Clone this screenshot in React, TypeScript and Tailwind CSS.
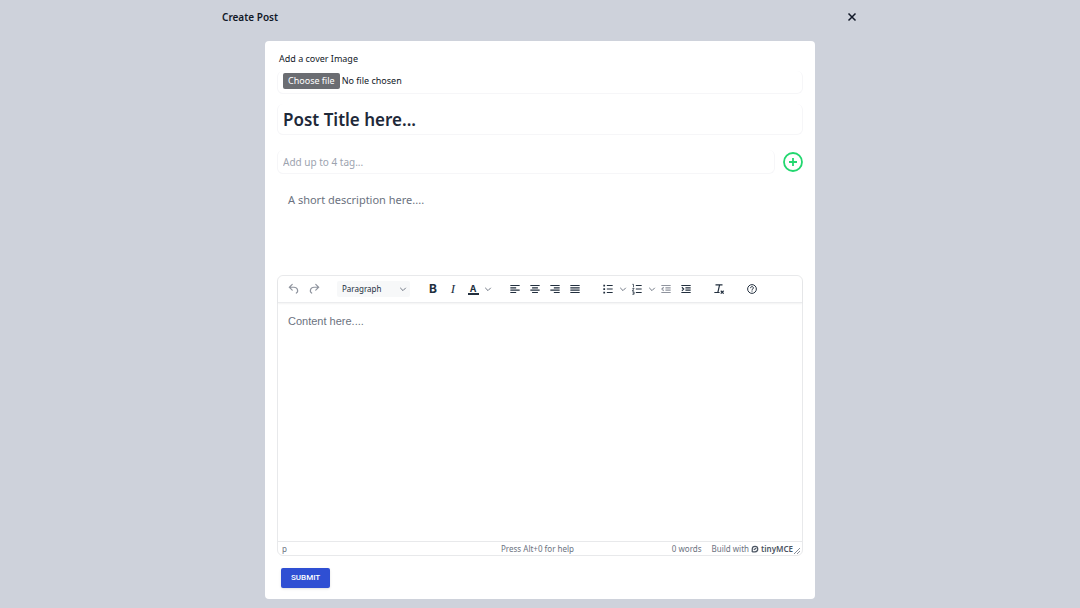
import type { ReactNode } from "react";

interface IconProps {
  children: ReactNode;
}

function Icon({ children }: IconProps) {
  return (
    <svg
      viewBox="0 0 24 24"
      className="h-[14px] w-[14px]"
      fill="none"
      stroke="currentColor"
      strokeWidth={2}
      aria-hidden="true"
    >
      {children}
    </svg>
  );
}

interface ToolProps {
  label: string;
  muted?: boolean;
  children: ReactNode;
}

function Tool({ label, muted, children }: ToolProps) {
  return (
    <button
      type="button"
      aria-label={label}
      className={`flex h-5 w-5 items-center justify-center ${muted ? "text-[#8f949e]" : "text-[#222f3e]"}`}
    >
      {children}
    </button>
  );
}

function Chevron({ label }: { label: string }) {
  return (
    <button type="button" aria-label={label} className="flex h-5 w-[9px] items-center justify-center text-[#6b7280]">
      <svg viewBox="0 0 10 10" className="h-2 w-2 shrink-0" fill="none" stroke="currentColor" aria-hidden="true">
        <path d="M1.5 3.5 5 7l3.5-3.5" strokeWidth={1.2} />
      </svg>
    </button>
  );
}

function Toolbar() {
  return (
    <div className="flex h-[27px] items-center gap-[13px] rounded-t-md border-b border-[#ebecee] bg-white pl-[6px] shadow-xs">
      <div className="flex">
        <Tool label="Undo" muted>
          <Icon>
            <path d="m9 4-5 5 5 5M4.5 9H12c6.5 0 8 7.500 4 10" strokeLinecap="round" />
          </Icon>
        </Tool>
        <Tool label="Redo" muted>
          <Icon>
            <path d="m15 4 5 5-5 5M19.5 9H12c-6.5 0-8 7.500-4 10" strokeLinecap="round" />
          </Icon>
        </Tool>
      </div>

      <div className="relative flex">
        <select
          aria-label="Block format"
          className="h-4 w-[73px] appearance-none rounded-xs bg-[#f7f8f9] pl-[5px] text-[8px] leading-4 text-[#222f3e]"
        >
          <option>Paragraph</option>
        </select>
        <svg
          viewBox="0 0 10 10"
          className="pointer-events-none absolute top-1 right-[3px] h-2 w-2"
          fill="none"
          stroke="#6b7280"
          aria-hidden="true"
        >
          <path d="M1.5 3.5 5 7l3.5-3.5" strokeWidth={1.2} />
        </svg>
      </div>

      <div className="flex">
        <Tool label="Bold">
          <span className="font-[Inter] text-[12px] leading-4 font-bold">B</span>
        </Tool>
        <Tool label="Italic">
          <span className="font-['Liberation_Serif'] text-[13px] leading-4 italic">I</span>
        </Tool>
        <Tool label="Text color">
          <span className="h-[11px] w-[11px] border-b-2 border-[#222f3e] text-center font-[Inter] text-[9px] leading-[9px] font-bold">
            A
          </span>
        </Tool>
        <Chevron label="Text colors" />
      </div>

      <div className="flex">
        <Tool label="Align left">
          <Icon>
            <path d="M4 6h16M4 10h10M4 14h16M4 18h10" />
          </Icon>
        </Tool>
        <Tool label="Align center">
          <Icon>
            <path d="M4 6h16M7 10h10M4 14h16M7 18h10" />
          </Icon>
        </Tool>
        <Tool label="Align right">
          <Icon>
            <path d="M4 6h16M10 10h10M4 14h16M10 18h10" />
          </Icon>
        </Tool>
        <Tool label="Justify">
          <Icon>
            <path d="M4 6h16M4 10h16M4 14h16M4 18h16" />
          </Icon>
        </Tool>
      </div>

      <div className="flex">
        <Tool label="Bullet list">
          <Icon>
            <path d="M10 6h10M10 12h10M10 18h10" />
            <path d="M4 6h3M4 12h3M4 18h3" strokeWidth={3} />
          </Icon>
        </Tool>
        <Chevron label="Bullet list styles" />
        <Tool label="Numbered list">
          <Icon>
            <path d="M10 6h10M10 12h10M10 18h10" />
            <path d="M4 4h2v5M4 11h3l-3 4h3M4 17h3v4H4M5 19h2" strokeWidth={1.3} />
          </Icon>
        </Tool>
        <Chevron label="Numbered list styles" />
        <Tool label="Decrease indent" muted>
          <Icon>
            <path d="M4 6h16M11 10h9M11 14h9M4 18h16M8 9l-3 3 3 3" />
          </Icon>
        </Tool>
        <Tool label="Increase indent">
          <Icon>
            <path d="M4 6h16M11 10h9M11 14h9M4 18h16M5 9l3 3-3 3" />
          </Icon>
        </Tool>
      </div>

      <Tool label="Clear formatting">
        <Icon>
          <path d="M6 5h12M13 5l-3 13M4 18h9M15 15l5 5M20 15l-5 5" />
        </Icon>
      </Tool>

      <Tool label="Help">
        <Icon>
          <circle cx="12" cy="12" r="7.5" strokeWidth={1.7} />
          <path d="M9.5 10.5c0-3.5 5-3.300 5-.3 0 1.800-2.500 1.800-2.500 3.300M12 14.5v2" strokeWidth={1.7} />
        </Icon>
      </Tool>
    </div>
  );
}

function Editor() {
  return (
    <div className="mx-3 rounded-md border border-[#e8e9eb]">
      <Toolbar />
      <textarea
        aria-label="Content"
        placeholder="Content here...."
        className="block h-[238px] w-full resize-none px-[10px] py-[10px] font-['Liberation_Sans',sans-serif] text-[11px] leading-4 outline-none placeholder:text-[#6b7280]"
      />
      <div className="flex h-[14px] items-center border-t border-[#e8e9eb] px-1 text-[8px] leading-3 text-[#6b7280]">
        <span className="flex-1">p</span>
        <span>Press Alt+0 for help</span>
        <div className="flex flex-1 items-center justify-end gap-[10px]">
          <span>0 words</span>
          <a href="#tiny" className="flex items-center gap-[2px]">
            Build with
            <svg viewBox="0 0 16 16" className="h-2 w-2" fill="none" stroke="#4b5563" strokeWidth={2.5} aria-hidden="true">
              <path d="M2.5 14V8A5.5 5.5 0 1 1 8 13.5H2.5M5.5 9.5l5-3" />
            </svg>
            <span className="font-semibold text-[#4b5563]">tinyMCE</span>
          </a>
        </div>
        <svg viewBox="0 0 6 6" className="-mr-[2px] mb-px ml-px h-[6px] w-[6px] self-end" fill="none" stroke="#6b7280" aria-hidden="true">
          <path d="M0 6l6-6M3 6l3-3" strokeWidth={0.8} />
        </svg>
      </div>
    </div>
  );
}

export default function App() {
  return (
    <div className="min-h-screen bg-[#ced2db] pb-2 font-['Noto_Sans',sans-serif] text-[#111827]">
      <header className="mx-auto flex h-[41px] w-full max-w-[636px] items-start justify-between pt-[9px]">
        <h1 className="text-[10px] leading-4 font-semibold">Create Post</h1>
        <button type="button" aria-label="Close" className="flex h-4 w-3 items-center justify-center">
          <svg viewBox="0 0 10 10" className="h-[10px] w-[10px]" fill="none" stroke="currentColor" aria-hidden="true">
            <path d="m1.5 1.5 7 7m0-7-7 7" strokeWidth={1.5} />
          </svg>
        </button>
      </header>

      <form className="mx-auto w-full max-w-[550px] rounded-sm bg-white pt-[10px] pb-[11px]">
        <p className="px-[14px] text-[9px] leading-4">Add a cover Image</p>

        <label className="mx-3 mt-1 flex h-[23px] items-center gap-[2px] rounded-md border-x border-b border-[#f6f6f8] px-[5px] pb-[2px] text-[9px] leading-4">
          <input type="file" className="sr-only" />
          <span className="rounded-xs bg-[#6b6d72] px-[5px] text-white">Choose file</span>
          <span>No file chosen</span>
        </label>

        <input
          type="text"
          aria-label="Post title"
          placeholder="Post Title here..."
          className="mx-3 mt-[10px] block h-[31px] w-[calc(100%-24px)] rounded-md border-x border-b border-[#f6f6f8] px-[5px] text-[17px] leading-6 font-semibold outline-none placeholder:text-gray-800"
        />

        <div className="mt-[15px] flex items-center gap-2 px-3">
          <input
            type="text"
            aria-label="Tags"
            placeholder="Add up to 4 tag..."
            className="h-6 min-w-0 flex-1 rounded-md border-x border-b border-[#f6f6f8] px-[5px] text-[10px] leading-4 outline-none placeholder:text-[#9ca3af]"
          />
          <button type="button" aria-label="Add tag" className="text-[#22d76f]">
            <svg viewBox="0 0 20 20" className="h-5 w-5" fill="none" stroke="currentColor" aria-hidden="true">
              <circle cx="10" cy="10" r="9" strokeWidth={1.8} />
              <path d="M10 6v8M6 10h8" strokeWidth={1.8} />
            </svg>
          </button>
        </div>

        <textarea
          aria-label="Short description"
          placeholder="A short description here...."
          className="mx-3 mt-[9px] mb-2 block h-[84px] w-[calc(100%-24px)] resize-none px-[11px] py-[9px] text-[11px] leading-4 outline-none placeholder:text-[#6b7280]"
        />

        <Editor />

        <button
          type="submit"
          className="mt-3 ml-4 block rounded-xs bg-[#2f4fd3] px-[10px] py-[2px] font-[Roboto] text-[8px] leading-4 font-medium text-white shadow-sm"
        >
          SUBMIT
        </button>
      </form>
    </div>
  );
}
